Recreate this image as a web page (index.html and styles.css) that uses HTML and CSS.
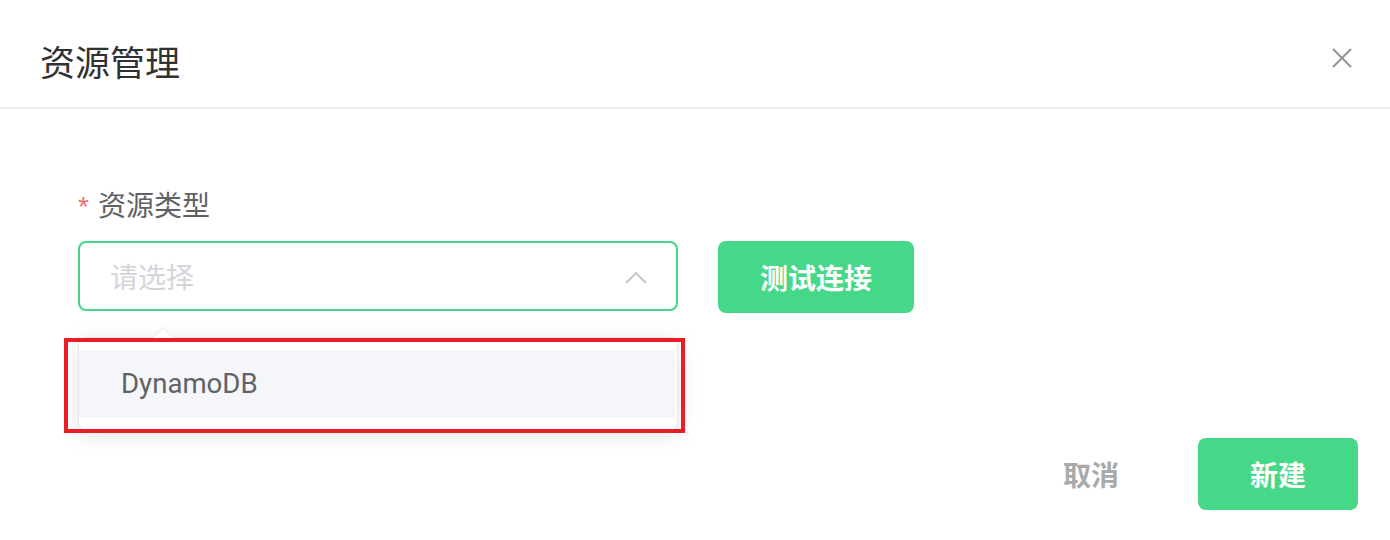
FILE: index.html
```html
<!DOCTYPE html>
<html lang="zh-CN">
<head>
<meta charset="utf-8">
<title>资源管理</title>
<link rel="stylesheet" href="styles.css">
</head>
<body>
<div class="dialog">
  <div class="dialog-header">
    <span class="dialog-title">资源管理</span>
    <button class="dialog-close" type="button" aria-label="关闭">
      <svg width="20" height="20" viewBox="0 0 20 20"><path d="M1 1 L19 19 M19 1 L1 19" stroke="#909399" stroke-width="2" fill="none"/></svg>
    </button>
  </div>
  <div class="dialog-body">
    <div class="form-item">
      <label class="form-label"><span class="required">*</span>资源类型</label>
      <div class="form-row">
        <div class="select-wrap">
          <div class="select">
            <span class="placeholder">请选择</span>
            <svg class="chevron" width="22" height="12" viewBox="0 0 22 12"><polyline points="1,11 11,1 21,11" stroke="#c0c4cc" stroke-width="1.8" fill="none"/></svg>
          </div>
          <div class="dropdown">
            <span class="dropdown-arrow"></span>
            <ul class="options">
              <li class="option hover">DynamoDB</li>
            </ul>
          </div>
          <div class="highlight-box"></div>
        </div>
        <button class="btn btn-primary btn-test" type="button">测试连接</button>
      </div>
    </div>
  </div>
  <div class="dialog-footer">
    <button class="btn btn-text" type="button">取消</button>
    <button class="btn btn-primary btn-create" type="button">新建</button>
  </div>
</div>
</body>
</html>
```

FILE: styles.css
```css
* { box-sizing: border-box; }
html, body { margin: 0; padding: 0; background: #fff; }
body {
  font-family: "Noto Sans CJK SC", "Noto Sans", sans-serif;
  width: 1390px;
  height: 540px;
  overflow: hidden;
}
.dialog { width: 1390px; height: 540px; display: flex; flex-direction: column; }

.dialog-header {
  height: 109px;
  padding: 43px 38px 0 40px;
  border-bottom: 2px solid #eeeeee;
  display: flex;
  justify-content: space-between;
  align-items: flex-start;
}
.dialog-title {
  font-size: 35px;
  line-height: 36px;
  color: #303133;
}
.dialog-close {
  margin-top: 5px;
  width: 20px;
  height: 20px;
  padding: 0;
  border: 0;
  background: none;
  display: block;
}
.dialog-close svg { display: block; }

.dialog-body {
  padding: 81px 0 0 78px;
}
.form-label {
  display: flex;
  align-items: center;
  height: 28px;
  font-size: 28px;
  line-height: 28px;
  color: #606266;
}
.required {
  font-family: "Liberation Sans", Arial, sans-serif;
  color: #f56c6c;
  font-size: 28px;
  margin-right: 9px;
  position: relative;
  top: 3px;
}
.form-row {
  margin-top: 23px;
  display: flex;
  align-items: flex-start;
  gap: 40px;
}
.select-wrap { position: relative; width: 600px; }
.select {
  height: 70px;
  border: 2px solid #46d689;
  border-radius: 8px;
  display: flex;
  align-items: center;
  justify-content: space-between;
  padding: 0 29px 0 30px;
}
.placeholder {
  font-size: 28px;
  line-height: 28px;
  color: #d3d5db;
}
.chevron { display: block; margin-top: 4px; }

.dropdown {
  position: absolute;
  left: 0;
  top: 96px;
  width: 600px;
  background: #fff;
  border: 1px solid #e4e7ed;
  border-radius: 8px;
  box-shadow: 0 4px 24px rgba(0, 0, 0, 0.1);
  z-index: 5;
}
.dropdown-arrow {
  position: absolute;
  left: 73px;
  top: -11px;
  width: 0;
  height: 0;
  border-left: 11px solid transparent;
  border-right: 11px solid transparent;
  border-bottom: 11px solid #e4e7ed;
}
.dropdown-arrow::after {
  content: "";
  position: absolute;
  left: -10px;
  top: 1px;
  border-left: 10px solid transparent;
  border-right: 10px solid transparent;
  border-bottom: 10px solid #fff;
}
.options { list-style: none; margin: 0; padding: 12px 2px 12px 0; }
.option {
  height: 68px;
  line-height: 68px;
  padding-left: 42px;
  font-family: Roboto, "Noto Sans", sans-serif;
  font-size: 27.6px;
  color: #606266;
}
.option.hover { background: #f5f6fa; }

.highlight-box {
  position: absolute;
  left: -14px;
  top: 97px;
  width: 621px;
  height: 95px;
  border: 4px solid #ec1c24;
  z-index: 6;
}

.btn {
  font-family: "Noto Sans CJK SC", sans-serif;
  font-size: 28px;
  font-weight: 700;
  border: 0;
  padding: 0;
  cursor: pointer;
}
.btn-primary {
  background: #44d888;
  color: #fff;
  border-radius: 8px;
  height: 72px;
}
.btn-test { width: 196px; }
.btn-text {
  background: none;
  color: #aaaaaa;
  height: 72px;
  padding: 0 40px;
}
.btn-create { width: 160px; }

.dialog-footer {
  margin-top: auto;
  padding: 0 32px 30px 0;
  display: flex;
  justify-content: flex-end;
  gap: 39px;
}
```
